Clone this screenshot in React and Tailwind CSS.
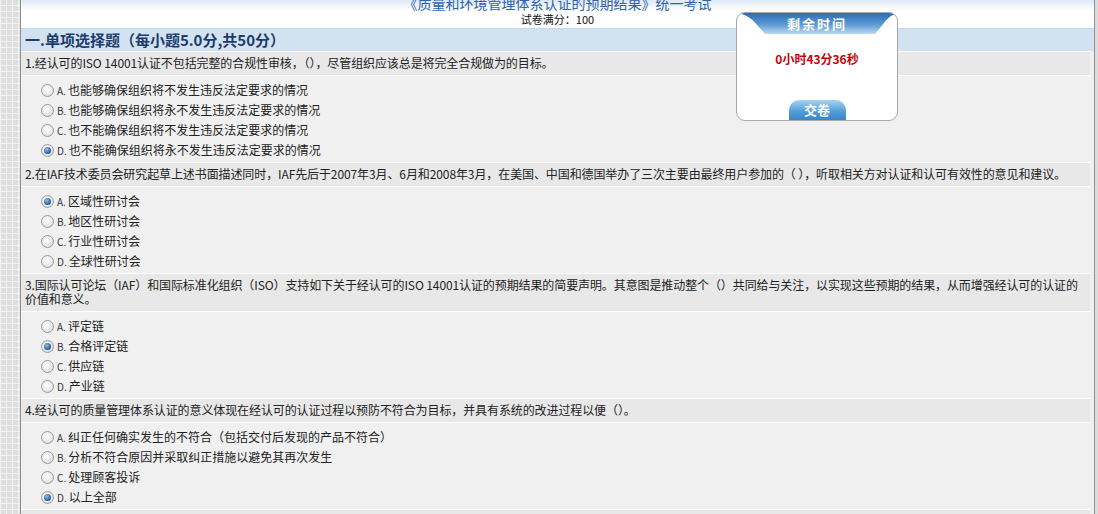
import React from "react";

const questions = [
  {
    text: ["1.经认可的ISO 14001认证不包括完整的合规性审核，（），尽管组织应该总是将完全合规做为的目标。"],
    options: [
      "也能够确保组织将不发生违反法定要求的情况",
      "也能够确保组织将永不发生违反法定要求的情况",
      "也不能确保组织将不发生违反法定要求的情况",
      "也不能确保组织将永不发生违反法定要求的情况",
    ],
    checked: 3,
  },
  {
    text: ["2.在IAF技术委员会研究起草上述书面描述同时，IAF先后于2007年3月、6月和2008年3月，在美国、中国和德国举办了三次主要由最终用户参加的（ ），听取相关方对认证和认可有效性的意见和建议。"],
    options: ["区域性研讨会", "地区性研讨会", "行业性研讨会", "全球性研讨会"],
    checked: 0,
  },
  {
    text: [
      "3.国际认可论坛（IAF）和国际标准化组织（ISO）支持如下关于经认可的ISO 14001认证的预期结果的简要声明。其意图是推动整个（）共同给与关注，以实现这些预期的结果，从而增强经认可的认证的",
      "价值和意义。",
    ],
    options: ["评定链", "合格评定链", "供应链", "产业链"],
    checked: 1,
  },
  {
    text: ["4.经认可的质量管理体系认证的意义体现在经认可的认证过程以预防不符合为目标，并具有系统的改进过程以便（）。"],
    options: [
      "纠正任何确实发生的不符合（包括交付后发现的产品不符合）",
      "分析不符合原因并采取纠正措施以避免其再次发生",
      "处理顾客投诉",
      "以上全部",
    ],
    checked: 3,
  },
  {
    text: ["5.在经认可的ISO 14001认证中，审核员应当评价组织环境管理体系的有效性。"],
    options: ["正确", "错误", "不确定", "以上都不是"],
    checked: -1,
  },
];

const letters = ["A", "B", "C", "D"];

function Radio({ checked }) {
  return (
    <span className="relative inline-flex items-center justify-center w-[13px] h-[13px] rounded-full border border-[#9a9a9a] bg-[radial-gradient(circle_at_40%_35%,#ffffff,#d6d6d6)] shrink-0">
      {checked && (
        <span className="w-[7px] h-[7px] rounded-full bg-[radial-gradient(circle_at_40%_35%,#8fc3ee,#2a64a8_60%,#123e73)]" />
      )}
    </span>
  );
}

function Question({ q }) {
  return (
    <div>
      <div className="bg-[#e8e8e8] border-t border-[#ffffff] px-[4px] pt-[4px] pb-[5px] text-[12px] leading-[14px] text-[#222]">
        {q.text.map((t, i) => (
          <div key={i} className="whitespace-nowrap tracking-[-0.1px]">{t}</div>
        ))}
      </div>
      <div className="bg-[#f0f0f0] border-t border-[#ffffff] pl-[20px] pt-[4px] pb-[2px]">
        {q.options.map((o, i) => (
          <div key={i} className="flex items-center h-[20px] gap-[2px] text-[12px] text-[#222]">
            <Radio checked={q.checked === i} />
            <span className="text-[10px] text-[#333] ml-[1px]">{letters[i]}.</span>
            <span>{o}</span>
          </div>
        ))}
      </div>
    </div>
  );
}

export default function App() {
  return (
    <div className="h-[514px] w-[1098px] overflow-hidden flex bg-[#e6e6e6] font-['Noto_Sans_CJK_SC','Noto_Sans',sans-serif]">
      <div className="w-[20px] shrink-0 bg-[#dedede] bg-[linear-gradient(90deg,#f2f2f2_1px,transparent_1px),linear-gradient(0deg,#f2f2f2_1px,transparent_1px)] bg-[length:6px_6px]" />
      <div className="relative flex-1 border-l border-r border-[#8f8f8f] bg-[#f0f0f0] flex flex-col">
        <div className="h-[28px] shrink-0 bg-[linear-gradient(180deg,#dce8f4_0px,#ffffff_10px)] flex flex-col items-center">
          <div className="mt-[-5px] text-[14px] leading-[16px] text-[#2f62ae]">《质量和环境管理体系认证的预期结果》统一考试</div>
          <div className="mt-[2px] text-[11px] leading-[13px] text-[#111]">试卷满分：100</div>
        </div>
        <div className="h-[23px] shrink-0 bg-[#d3e2f1] border-t border-[#c4d6ea] flex items-center pl-[4px] text-[15px] font-bold text-[#1d3b6c]">
          一.单项选择题（每小题5.0分,共50分）
        </div>
        <div className="mr-[4px]">
          {questions.map((q, i) => (
            <Question key={i} q={q} />
          ))}
        </div>

        <div className="absolute left-[715px] top-[12px] w-[162px] h-[109px] rounded-[9px] border border-[#a8a8a8] bg-white overflow-hidden flex flex-col items-center">
          <div className="relative w-full h-[22px]">
            <svg width="162" height="22" viewBox="0 0 162 22" className="absolute inset-0">
              <defs>
                <linearGradient id="tabg" x1="0" y1="0" x2="0" y2="1">
                  <stop offset="0" stopColor="#2d6cb4" />
                  <stop offset="0.55" stopColor="#5d9ad4" />
                  <stop offset="1" stopColor="#bcd9f0" />
                </linearGradient>
              </defs>
              <path d="M0,0 H162 C150,2 148,10 138,21 H28 C18,10 14,2 0,0 Z" fill="url(#tabg)" />
            </svg>
            <div className="absolute inset-0 flex items-center justify-center text-white text-[13px] font-bold tracking-[2px]">剩余时间</div>
          </div>
          <div className="mt-[17px] text-[12px] font-bold text-[#c8000a] leading-[14px]">0小时43分36秒</div>
          <div className="mt-auto w-[57px] h-[20px] rounded-t-[10px] bg-[linear-gradient(180deg,#a6d3f2,#4f9ad6_60%,#3b86c8)] flex items-center justify-center text-white text-[13px] font-bold">
            交卷
          </div>
        </div>
      </div>
      <div className="w-[3px] shrink-0 bg-[#dcdcdc]" />
    </div>
  );
}
